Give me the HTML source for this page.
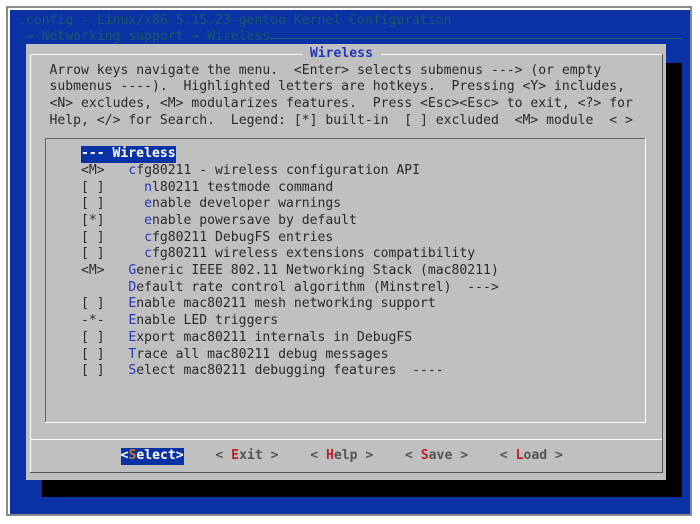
<!DOCTYPE html>
<html><head><meta charset="utf-8"><style>
*{margin:0;padding:0}
body{width:700px;height:524px;background:#fff;position:relative;overflow:hidden;font-family:"DejaVu Sans Mono","Liberation Mono",monospace;font-size:13.1px;}
.a{position:absolute;white-space:pre;line-height:16.7px;}
.t{color:#2a2a2a}
.h{color:#2238b8}
.b{font-weight:bold}
.r{color:#c0202a}
.g{color:#555}
#w{position:absolute;left:0;top:2.5px;width:700px;height:521px}
</style></head><body>
<div style="position:absolute;left:6px;top:6px;width:686px;height:510px;border:2px solid #8a8a8a;box-sizing:border-box;background:#fff"></div>
<div style="position:absolute;left:10px;top:10px;width:680px;height:504px;background:#0a32a4"></div>
<div id="w">
<div class="a" style="left:18px;top:10px;color:#17586c">.config - Linux/x86 5.15.23-gentoo Kernel Configuration</div>
<div class="a" style="left:18px;top:26.7px;color:#17586c"> → Networking support → Wireless</div>
<div style="position:absolute;left:270px;top:35px;width:412px;height:1px;background:#2a5f80"></div>
<div style="position:absolute;left:666px;top:60px;width:16px;height:434px;background:#000"></div>
<div style="position:absolute;left:41.6px;top:477.6px;width:640px;height:16.7px;background:#000"></div>
<div style="position:absolute;left:25.8px;top:41.4px;width:640.2px;height:436.2px;background:#c0c0c0"></div>
<div style="position:absolute;left:30px;top:51px;width:632px;height:1px;background:#fff"></div>
<div style="position:absolute;left:30px;top:51px;width:1px;height:418px;background:#fff"></div>
<div style="position:absolute;left:30px;top:469px;width:633px;height:1px;background:#555"></div>
<div style="position:absolute;left:662px;top:51px;width:1px;height:419px;background:#555"></div>
<div style="position:absolute;left:30px;top:436px;width:632px;height:1px;background:#fff"></div>
<div class="a b" style="left:302px;top:43.4px;background:#c0c0c0;color:#2238b8"> Wireless </div>
<div class="a t" style="left:49.5px;top:60.1px">Arrow keys navigate the menu.  &lt;Enter&gt; selects submenus ---&gt; (or empty
submenus ----).  Highlighted letters are hotkeys.  Pressing &lt;Y&gt; includes,
&lt;N&gt; excludes, &lt;M&gt; modularizes features.  Press &lt;Esc&gt;&lt;Esc&gt; to exit, &lt;?&gt; for
Help, &lt;/&gt; for Search.  Legend: [*] built-in  [ ] excluded  &lt;M&gt; module  &lt; &gt;</div>
<div style="position:absolute;left:45px;top:135px;width:601px;height:1px;background:#666"></div>
<div style="position:absolute;left:45px;top:135px;width:1px;height:284px;background:#666"></div>
<div style="position:absolute;left:45px;top:419px;width:601px;height:1px;background:#fff"></div>
<div style="position:absolute;left:645px;top:135px;width:1px;height:285px;background:#fff"></div>
<div class="a b" style="left:81px;top:143.6px;background:#0a32a4;color:#fff">--- Wireless</div>
<div class="a t" style="left:81px;top:160.3px">&lt;M&gt;   <span class="h">c</span>fg80211 - wireless configuration API
[ ]     <span class="h">n</span>l80211 testmode command
[ ]     <span class="h">e</span>nable developer warnings
[*]     <span class="h">e</span>nable powersave by default
[ ]     <span class="h">c</span>fg80211 DebugFS entries
[ ]     <span class="h">c</span>fg80211 wireless extensions compatibility
&lt;M&gt;   <span class="h">G</span>eneric IEEE 802.11 Networking Stack (mac80211)
      <span class="h">D</span>efault rate control algorithm (Minstrel)  ---&gt;
[ ]   <span class="h">E</span>nable mac80211 mesh networking support
-*-   <span class="h">E</span>nable LED triggers
[ ]   <span class="h">E</span>xport mac80211 internals in DebugFS
[ ]   <span class="h">T</span>race all mac80211 debug messages
[ ]   <span class="h">S</span>elect mac80211 debugging features  ----</div>
<div class="a b" style="left:120.6px;top:445.5px;background:#0a32a4;color:#fff">&lt;<span style="color:#c87a2a">S</span>elect&gt;</div>
<div class="a b g" style="left:215.4px;top:445.5px">&lt; <span class="r">E</span>xit &gt;</div>
<div class="a b g" style="left:310.2px;top:445.5px">&lt; <span class="r">H</span>elp &gt;</div>
<div class="a b g" style="left:405px;top:445.5px">&lt; <span class="r">S</span>ave &gt;</div>
<div class="a b g" style="left:499.8px;top:445.5px">&lt; <span class="r">L</span>oad &gt;</div>
</div>
</body></html>
